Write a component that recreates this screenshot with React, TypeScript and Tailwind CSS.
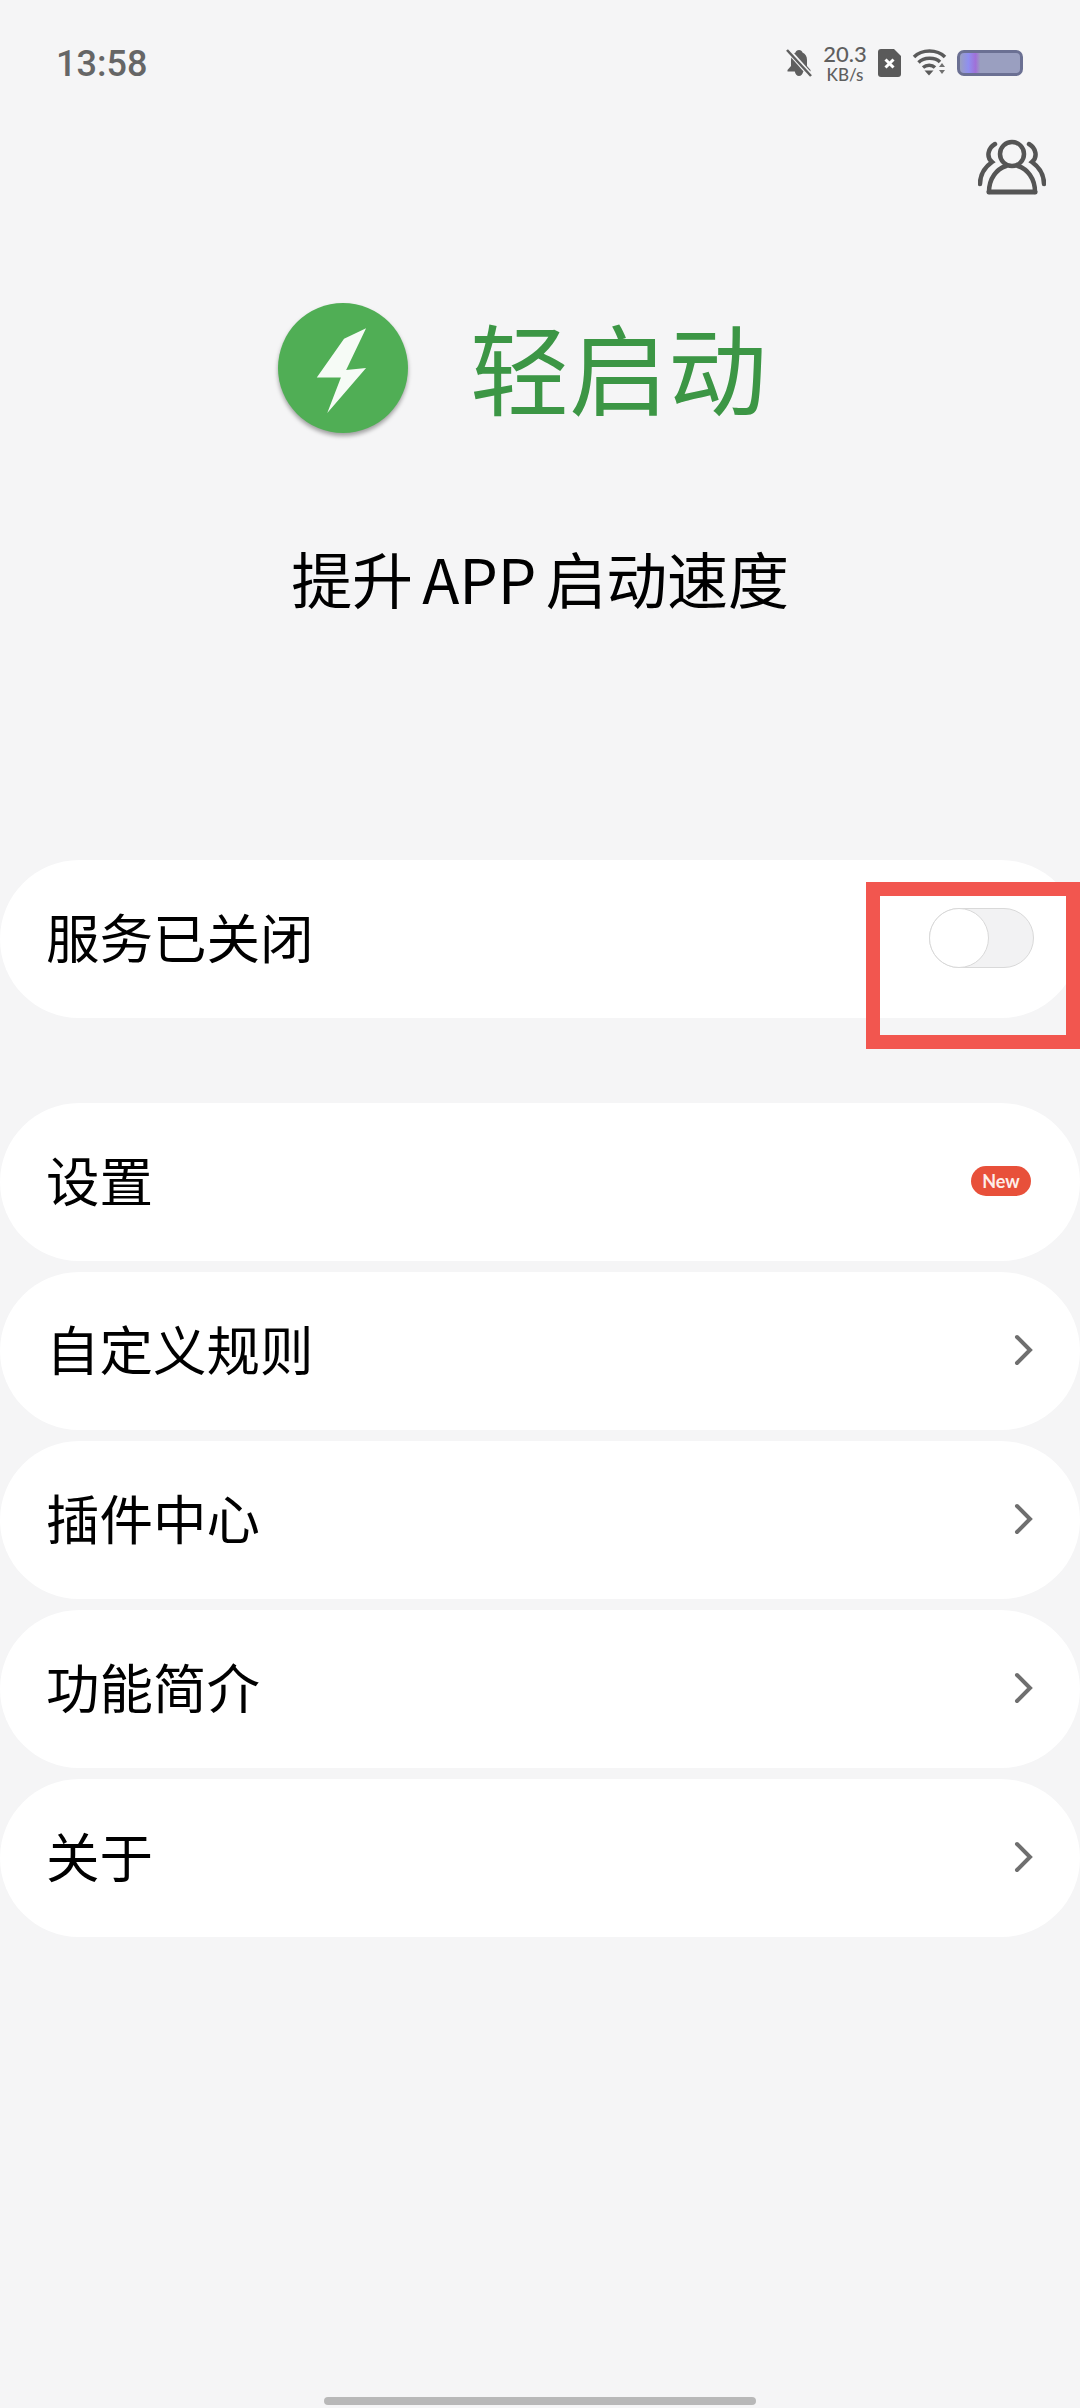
import React from 'react';

const Chevron = () => (
  <svg width="20" height="32" viewBox="0 0 20 32" fill="none">
    <path d="M3 3 L16 16 L3 29" stroke="#6f6f6f" strokeWidth="4" strokeLinecap="round" strokeLinejoin="miter" />
  </svg>
);

const Bell = () => (
  <svg width="26" height="30" viewBox="0 0 26 30">
    <path d="M13 2c-2 0-3 1-3.500 2.500C6.500 5.800 5 8.500 5 12v6l-3.500 4v1.500h7.300c.4 2.500 2.200 4.500 4.200 4.500s3.800-2 4.200-4.500h7.300V22L21 18v-6c0-3.500-1.500-6.200-4.500-7.500C16 3 15 2 13 2z" fill="#5f5f5f" />
    <path d="M1 1 L25 28" stroke="#f5f5f6" strokeWidth="5" />
    <path d="M1 2 L25 28" stroke="#5f5f5f" strokeWidth="2.500" />
  </svg>
);

const Sim = () => (
  <svg width="23" height="28" viewBox="0 0 23 28">
    <path d="M3 0h13l7 7v18a3 3 0 0 1-3 3H3a3 3 0 0 1-3-3V3a3 3 0 0 1 3-3z" fill="#5a5a5a" />
    <path d="M7.500 10.500l8 8M15.500 10.500l-8 8" stroke="#fff" strokeWidth="3" />
  </svg>
);

const Wifi = () => (
  <svg width="35" height="28" viewBox="0 0 35 28" fill="none">
    <path d="M2 8C10 0 25 0 33 8" stroke="#5a5a5a" strokeWidth="3.500" />
    <path d="M6.500 13.500C12 8 23 8 28 13" stroke="#5a5a5a" strokeWidth="3.500" />
    <path d="M11 18.500c3.500-3 9-3 12 0" stroke="#5a5a5a" strokeWidth="3.500" />
    <path d="M12.500 21.500h9l-4.500 5z" fill="#5a5a5a" />
    <path d="M27 18l3-4 3 4zM27 21h6l-3 4z" fill="#707070" />
  </svg>
);

const People = () => (
  <svg width="68" height="58" viewBox="0 0 68 58" fill="none" stroke="#555555" strokeWidth="4.500" strokeLinecap="round">
    <circle cx="34" cy="16" r="12" />
    <path d="M11 54 C11 40 19 31 28 28 M57 54 C57 40 49 31 40 28" />
    <path d="M11 54 H57" strokeWidth="5" />
    <path d="M17 6 C10 10 8 19 14 24 C7 29 2 36 2 46" />
    <path d="M51 6 C58 10 60 19 54 24 C61 29 66 36 66 46" />
  </svg>
);

const Logo = () => (
  <div className="w-[130px] h-[130px] rounded-full bg-[#50ae55] shadow-[0_3px_4px_rgba(0,0,0,0.35)] flex items-center justify-center">
    <svg width="130" height="130" viewBox="0 0 124 124">
      <polygon points="84,24 63,34 37,71 60,71 47,105 84,62 65,64" fill="#f6fbf6" />
    </svg>
  </div>
);

const Row = ({ label, children }: { label: string; children?: React.ReactNode }) => (
  <div className="h-[158px] w-full bg-white rounded-[79px] flex items-center justify-between pl-[46px]">
    <span className="text-[53.5px] leading-none pb-[7px] text-black">{label}</span>
    {children}
  </div>
);

const menu = ['自定义规则', '插件中心', '功能简介', '关于'];

const App: React.FC = () => {
  return (
    <div className="relative w-[1080px] h-[2408px] bg-[#f5f5f6] flex flex-col font-['Noto_Sans_CJK_SC',sans-serif] overflow-hidden">
      {/* status bar */}
      <div className="h-[126px] pl-[56px] pr-[57px] flex items-center justify-between">
        <span className="font-['Roboto',sans-serif] text-[36px] font-medium leading-none pt-[2px] text-[#666666]">13:58</span>
        <div className="flex items-center">
          <Bell />
          <div className="ml-[11px] w-[44px] flex flex-col items-center font-['Lato',sans-serif] font-medium text-[#5f5f5f]">
            <span className="text-[22px] leading-[24px]">20.3</span>
            <span className="text-[17px] leading-[18px]">KB/s</span>
          </div>
          <div className="ml-[11px]"><Sim /></div>
          <div className="ml-[11px]"><Wifi /></div>
          <div className="ml-[10px] w-[66px] h-[26px] rounded-[7px] border-[3px] border-[#6b7093] bg-[linear-gradient(90deg,#9a9fc0_0%,#8f8ff0_14%,#a070d8_26%,#9a9fc0_34%,#9a9fc0_100%)]" />
        </div>
      </div>

      <div className="pr-[34px] pt-[12px] flex justify-end">
        <People />
      </div>

      {/* logo */}
      <div className="mt-[107px] pl-[278px] flex items-center gap-[62px]">
        <Logo />
        <span className="text-[99px] leading-none pb-[6px] text-[#3c9645]">轻启动</span>
      </div>

      <div className="mt-[111px] text-center text-[61px] leading-[68px] tracking-[-0.2px] text-black [word-spacing:-4px]">提升 APP 启动速度</div>

      {/* service switch */}
      <div className="mt-[248px] relative">
        <Row label="服务已关闭">
          <div className="relative mr-[46px] mb-[3px] w-[105px] h-[60px] rounded-full bg-[#f2f2f3] border border-[#d9d9d9]">
            <div className="absolute -left-px -top-px w-[60px] h-[60px] rounded-full bg-white border border-[#d9d9d9]" />
          </div>
        </Row>
        <div className="absolute left-[866px] top-[22px] w-[214px] h-[167px] border-[14px] border-[#f2564f]" />
      </div>

      <div className="mt-[85px] flex flex-col gap-[11px]">
        <Row label="设置">
          <span className="mr-[49px] mb-[3px] w-[60px] h-[30px] rounded-full bg-[#e8503a] flex items-center justify-center font-['Lato',sans-serif] font-bold text-[18px] leading-none text-[#fdeeea]">New</span>
        </Row>
        {menu.map((label) => (
          <Row key={label} label={label}>
            <div className="mr-[46px] mb-[3px] flex items-center"><Chevron /></div>
          </Row>
        ))}
      </div>

      {/* gesture bar */}
      <div className="mt-auto mb-[3px] self-center w-[432px] h-[8px] rounded-full bg-[#b8b8b8]" />
    </div>
  );
};

export default App;
